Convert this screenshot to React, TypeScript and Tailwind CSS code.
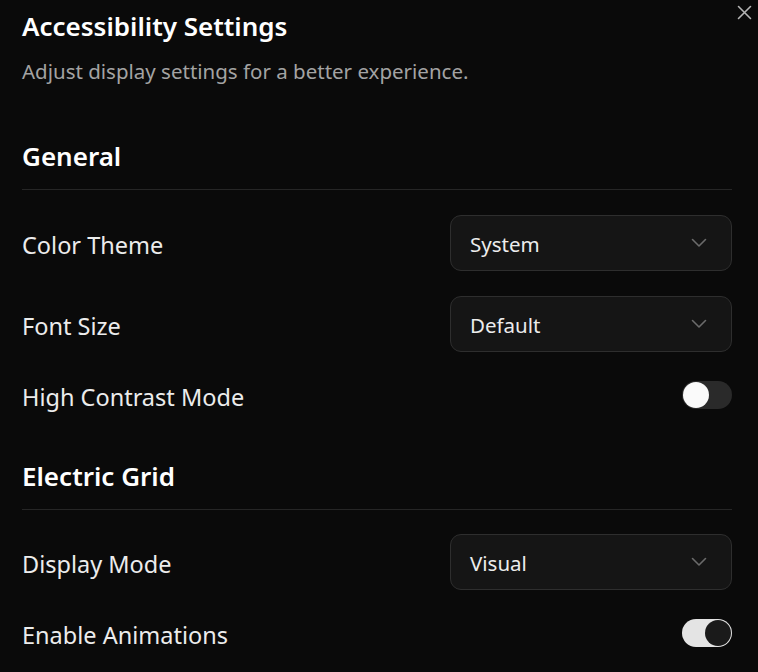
import React from "react";

function Chevron() {
  return (
    <svg width="16" height="10" viewBox="0 0 16 10" fill="none" className="shrink-0">
      <path d="M1.5 1.5 L8 8 L14.5 1.5" stroke="#6b6b6b" strokeWidth="1.6" strokeLinecap="round" strokeLinejoin="round" />
    </svg>
  );
}

function Select({ value }: { value: string }) {
  return (
    <div className="flex h-[56px] w-[282px] items-center justify-between rounded-[11px] border border-[#2e2e2e] bg-[#151515] pl-[19px] pr-[24px]">
      <span className="pt-[2px] text-[20.5px] text-[#ececec]">{value}</span>
      <Chevron />
    </div>
  );
}

function Toggle({ on }: { on: boolean }) {
  return on ? (
    <div className="flex h-[28px] w-[50px] items-center justify-end rounded-full bg-[#e4e4e4] px-[1px]">
      <div className="h-[26px] w-[26px] rounded-full bg-[#1a1a1a]" />
    </div>
  ) : (
    <div className="flex h-[28px] w-[50px] items-center justify-start rounded-full bg-[#2a2a2a] px-[1px]">
      <div className="h-[26px] w-[26px] rounded-full bg-[#fafafa]" />
    </div>
  );
}

function Row({ label, children, h }: { label: string; children: React.ReactNode; h: string }) {
  return (
    <div className={`flex items-center justify-between ${h}`}>
      <span className="pt-[5px] text-[23.5px] text-[#ececec]">{label}</span>
      {children}
    </div>
  );
}

function Heading({ title }: { title: string }) {
  return (
    <div className="flex flex-col">
      <h2 className="text-[26px] font-semibold leading-[34px] text-white">{title}</h2>
      <div className="mt-[16px] h-px w-full bg-[#262626]" />
    </div>
  );
}

export default function App() {
  return (
    <div
      className="relative h-[672px] w-[758px] overflow-hidden bg-[#0a0a0a] pl-[22px] pr-[26px]"
      style={{ fontFamily: '"Noto Sans", "Open Sans", sans-serif' }}
    >
      <button className="absolute right-[6px] top-[5px] text-[#b5b5b5]">
        <svg width="15" height="15" viewBox="0 0 15 15" fill="none">
          <path d="M1.5 1.5 L13.5 13.5 M13.5 1.5 L1.5 13.5" stroke="currentColor" strokeWidth="1.6" strokeLinecap="round" />
        </svg>
      </button>
      <div className="flex flex-col pt-[8px]">
        <h1 className="text-[26px] font-semibold leading-[36px] text-white">Accessibility Settings</h1>
        <p className="mt-[14px] text-[20.5px] leading-[26px] text-[#a3a3a3]">Adjust display settings for a better experience.</p>

        <div className="mt-[55px]">
          <Heading title="General" />
        </div>
        <div className="mt-[25px] flex flex-col gap-[25px]">
          <Row label="Color Theme" h="h-[56px]">
            <Select value="System" />
          </Row>
          <Row label="Font Size" h="h-[56px]">
            <Select value="Default" />
          </Row>
        </div>
        <div className="mt-[16px]">
          <Row label="High Contrast Mode" h="h-[54px]">
            <Toggle on={false} />
          </Row>
        </div>

        <div className="mt-[37px]">
          <Heading title="Electric Grid" />
        </div>
        <div className="mt-[24px] flex flex-col gap-[16px]">
          <Row label="Display Mode" h="h-[56px]">
            <Select value="Visual" />
          </Row>
          <Row label="Enable Animations" h="h-[54px]">
            <Toggle on={true} />
          </Row>
        </div>
      </div>
    </div>
  );
}
